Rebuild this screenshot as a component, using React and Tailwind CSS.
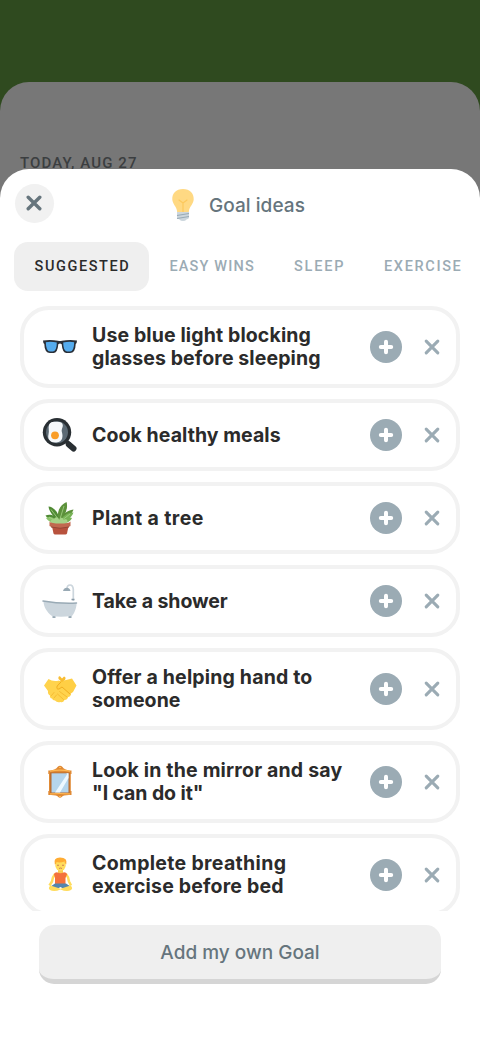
import { useState } from "react";
import clsx from "clsx";

/* emoji style drawings, all on a 36x36 grid */
const Glasses = () => (
  <svg viewBox="0 0 36 36" className="size-9 shrink-0">
    <path d="M1 11.4Q9 10.2 16 11.8Q18 12.4 20 11.8Q27 10.2 35 11.4L34.6 14L33.7 15Q33.5 24 28 24H24.5Q20.4 24 19.7 15.3Q18 13.8 16.3 15.3Q15.6 24 11.500 24H8Q2.500 24 2.300 15L1.400 14Z" fill="#292f38" />
    <path d="M3.800 13.200Q9 12.300 14.800 13.600Q14.700 22.500 11 22.500H8Q4 22.500 3.800 13.200Z" fill="#55acee" />
    <path d="M32.200 13.200Q27 12.300 21.200 13.600Q21.300 22.500 25 22.500H28Q32 22.500 32.200 13.200Z" fill="#55acee" />
  </svg>
);

const Pan = () => (
  <svg viewBox="0 0 36 36" className="size-9 shrink-0">
    <path d="M26.800 27.500L31.500 31.500" stroke="#292f33" strokeWidth="6" strokeLinecap="round" />
    <path d="M23 23L28 28" stroke="#292f33" strokeWidth="4" />
    <circle cx="15" cy="15.200" r="14.200" fill="#292f33" />
    <circle cx="15" cy="15.200" r="11" fill="#5c6a74" />
    <path d="M7 8C8.500 4.500 11 5 14 4.800C18 4.500 20.500 5.500 20.800 8C21 11 19 12 20 15.500C21 19 21 25 14.500 25.500C8 26 5.300 22 6.500 17.500C7.500 13.500 6 11 7 8Z" fill="#f5f8fa" />
    <circle cx="13" cy="18.300" r="3.900" fill="#f99d27" />
  </svg>
);

const Plant = () => (
  <svg viewBox="0 0 36 36" className="size-9 shrink-0">
    <path d="M18 22C12 21 6 19.500 3.500 15.500C9 13.500 15 16 18 22Z" fill="#4f8a34" />
    <path d="M18 21C20 14 25 10.500 31.500 9.500C30 14.500 25 18 19 22Z" fill="#5c913b" />
    <path d="M17 21C11 17 7 11 6.500 6.500C12 7 17 13 18 21Z" fill="#4f8a34" />
    <path d="M17 20C14 12 18 5 24.500 2C26.500 8 23 16 18 21Z" fill="#5c913b" />
    <path d="M18 22C20 16 26 12 31.500 12.500C29.500 18 24 21 18 23Z" fill="#77b255" />
    <path d="M17 23C13 17 7 16 4 18C7 22 12 24 17 24Z" fill="#8cc46c" />
    <path d="M18 24C18 19 24 16.500 30 18C28 22 23 24 18 24Z" fill="#77b255" />
    <path d="M9 23C8 20 11 18 12 20C12 17 16 16 17 20C19 16 22 18 21 20C25 18 27 21 24 24H10Z" fill="#a6d388" />
    <path d="M18 19L22 6M17 20L9 9.500M19 21L28 14M14 21L7 17" stroke="#a6d388" strokeWidth=".8" fill="none" />
    <path d="M9.500 24H27L25 33.500Q24.500 34.500 23.500 34.500H13Q12 34.500 11.500 33.500Z" fill="#b8523d" />
    <path d="M7.500 21.500Q9 23.500 18 23.500T28.500 21.500V26Q25 28 18 28T7.500 26Z" fill="#c1694f" />
    <path d="M9 27Q18 29.500 27 27" stroke="#974635" strokeWidth="1" fill="none" />
  </svg>
);

const Bathtub = () => (
  <svg viewBox="0 0 36 36" className="size-9 shrink-0">
    <path d="M31.300 18V6.500Q31 2 28 2T25 6" stroke="#ccd6dd" strokeWidth="1.700" fill="none" />
    <path d="M21 8Q22 4.800 24.800 4.800T28.500 8Z" fill="#99aab5" />
    <path d="M29.500 16.500H32.500" stroke="#8899a6" strokeWidth="1.500" />
    <path d="M12 32V35M28 32V35" stroke="#99aab5" strokeWidth="3" />
    <path d="M1.500 18C14 20 24 20.500 34.500 20V22C34 26 32 31 30 33Q18 34.500 10 33C4.500 29 1.500 23 1.500 18Z" fill="#ccd6dd" />
    <path d="M1 18C13 20 24 20.500 34.500 20" stroke="#99aab5" strokeWidth="1.500" strokeLinecap="round" fill="none" />
  </svg>
);

const Handshake = () => (
  <svg viewBox="0 0 36 36" className="size-9 shrink-0">
    <path d="M2 14.500L6.500 8Q11 11 17 9.500L21 13L29 23Q28.500 26 26 26Q25.500 29 22.500 29Q21 32 18.500 31Q15 32 13 29.500Q10.500 29.500 10 27.500Q7.500 27 8 24.500Q5.500 23 6 20Z" fill="#ffd34d" />
    <path d="M17 10L22 9.500L30 7.500L34.500 14.500L31 21L27.500 23.500L20 16L16 19Q13.500 17.500 15 14.500Z" fill="#ffcf45" />
    <path d="M19 11L15.200 15Q14 18.500 17 18L20 16L28 23" stroke="#f0ae22" strokeWidth="1" strokeLinecap="round" strokeLinejoin="round" fill="none" />
    <path d="M17.500 20.500L25 26M15.500 23L21.500 28.500M9.500 24.500L12 21.500M12 27L14.500 24" stroke="#f4b52b" strokeWidth=".8" strokeLinecap="round" fill="none" />
    <path d="M16.500 8Q16 4.800 18 5.200L20 7.500L22 5.500Q24.500 6 23 9L20 11Z" fill="#f9bd32" />
  </svg>
);

const Mirror = () => (
  <svg viewBox="0 0 36 36" className="size-9 shrink-0">
    <path d="M6.300 6.500H8Q14 5.500 15.500 3Q18 .500 20.500 3Q22 5.500 28 6.500H29.500V10H28.800V27H29.500V31H27Q21 31 20 32.800Q18 34.500 16 32.800Q15 31 9 31H6.300V27H7V10H6.300Z" fill="#e08a35" />
    <path d="M8 7.300Q18 5 28 7.300M8 30Q18 29 28 30M17 3.500H19M17 32.500H19" stroke="#ffb955" strokeWidth="1.100" fill="none" />
    <path d="M8.200 8.500H27.700V29H8.200Z" fill="#b3692f" />
    <path d="M9.500 9.300H26.500V28.500H9.500Z" fill="#b5d5ec" />
    <path d="M24.500 9.300H26.500V14L18 28.500H13L25 10.500Z" fill="#edf8ff" />
  </svg>
);

const Meditation = () => (
  <svg viewBox="0 0 36 36" className="size-9 shrink-0">
    <path d="M13 17Q10.500 20 10 24.500L7.500 28.500" stroke="#ffdc5d" strokeWidth="2.500" fill="none" />
    <path d="M24 17Q26.500 20 27 24.500L29 28.500" stroke="#ffdc5d" strokeWidth="2.500" fill="none" />
    <path d="M16 12H21V18H16Z" fill="#f9ca55" />
    <ellipse cx="18.500" cy="8" rx="5.300" ry="6" fill="#ffdc5d" />
    <path d="M12.800 7.500Q11 .800 18 .600Q26 .600 24.300 7.500Q22.500 6.500 22.500 4.500Q18 6 14.500 5Q14.500 7 12.800 7.500Z" fill="#ffac33" />
    <path d="M15 8Q16 9 17 8M20 8Q21 9 22 8M17 11.500Q18.500 10.500 20 11.500" stroke="#c1694f" strokeWidth=".8" fill="none" />
    <path d="M12 17.500Q12 15.500 15 15.200Q18.500 17.500 22 15.200Q25 15.500 25 17.500L23.500 21V28H13V21Z" fill="#f4713c" />
    <path d="M13 26.500H24L28.500 29.500Q22 33 18.500 30Q15 33 8.500 29.500Z" fill="#5385ae" />
    <path d="M8.500 28.500L18.500 31.800L28.500 28.500Q31.500 31 29 33Q25 35.300 18.500 32.500Q12 35.300 8 33Q5.500 31 8.500 28.500Z" fill="#ffdc5d" />
  </svg>
);

const Bulb = () => (
  <svg viewBox="0 0 24 34" className="h-[34px] w-6 shrink-0">
    <path d="M12 1C5 1 1 5.500 1.300 11.500C1.500 16 5.700 18.500 6.200 24H17.800C18.300 18.500 22.500 16 22.700 11.500C23 5.500 19 1 12 1Z" fill="#ffd983" />
    <path d="M8 12L12 15L16 12M12 15V24" stroke="#fcc85c" strokeWidth="1.200" fill="none" strokeLinecap="round" strokeLinejoin="round" />
    <path d="M6 24H18V29.500Q18 31 15.500 31.500Q14.500 33 12 33T8.500 31.500Q6 31 6 29.500Z" fill="#ccd6dd" />
    <path d="M6 27.500L18 25.500M6 30.500L18 28.500" stroke="#99aab5" strokeWidth="1.200" />
  </svg>
);

const Cross = ({ className }) => (
  <svg viewBox="0 0 16 16" className={className} fill="none" stroke="currentColor" strokeLinecap="round">
    <path d="M2.200 2.200L13.800 13.800M13.800 2.200L2.200 13.800" />
  </svg>
);

const tabs = [
  { name: "Suggested", style: "w-[135px] pl-[20.5px] tracking-[1.6px]" },
  { name: "Easy wins", style: "w-[125px] pl-[20.5px] tracking-[1.15px]" },
  { name: "Sleep", style: "w-[90px] pl-5 tracking-[1.8px]" },
  { name: "Exercise", style: "w-[110px] pl-5 tracking-[1.65px]" },
];

const goals = [
  {
    Icon: Glasses,
    lines: [
      { text: "Use blue light blocking", style: "tracking-[0.12px]" },
      { text: "glasses before sleeping", style: "tracking-[0.1px]" },
    ],
  },
  { Icon: Pan, lines: [{ text: "Cook healthy meals", style: "tracking-[0.06px]" }] },
  { Icon: Plant, lines: [{ text: "Plant a tree", style: "tracking-[0.4px]" }] },
  { Icon: Bathtub, lines: [{ text: "Take a shower", style: "tracking-[-0.07px]" }] },
  {
    Icon: Handshake,
    lines: [
      { text: "Offer a helping hand to", style: "tracking-[0.17px]" },
      { text: "someone", style: "tracking-[0.08px]" },
    ],
  },
  {
    Icon: Mirror,
    lines: [
      { text: "Look in the mirror and say", style: "tracking-[0.18px]" },
      { text: '"I can do it"', style: "tracking-[-0.1px]" },
    ],
  },
  {
    Icon: Meditation,
    lines: [
      { text: "Complete breathing", style: "tracking-[0.32px]" },
      { text: "exercise before bed", style: "tracking-[0.18px]" },
    ],
  },
];

const GoalCard = ({ goal }) => {
  const { Icon, lines } = goal;
  return (
    <div
      className={clsx(
        "flex shrink-0 items-center rounded-[29px] border-4 border-[#f2f2f2] pl-[18px] pr-4",
        lines.length > 1 ? "h-[82px]" : "h-[72px]"
      )}
    >
      <Icon />
      <div className="ml-[14px] flex-1 font-['Inter',sans-serif] text-[19.5px] font-bold leading-[23px] text-[#2b2b2b]">
        {lines.map((line) => (
          <div key={line.text}>
            <span className={clsx("whitespace-nowrap", line.style)}>{line.text}</span>
          </div>
        ))}
      </div>
      <button className="flex size-8 shrink-0 items-center justify-center rounded-full bg-[#9babb4]">
        <svg viewBox="0 0 16 16" className="size-4" stroke="#fff" strokeWidth="4" strokeLinecap="round">
          <path d="M8 2.800V13.200M2.800 8H13.200" />
        </svg>
      </button>
      <button className="ml-[22px] shrink-0 text-[#9babb4]">
        <Cross className="size-4 stroke-[3.1]" />
      </button>
    </div>
  );
};

export default function App() {
  const [active, setActive] = useState("Suggested");

  return (
    <div className="h-[1040px] w-[480px] overflow-hidden bg-[#2f4a1f] pt-[82px] font-['Roboto',sans-serif]">
      <div className="h-full rounded-t-[29px] bg-[#777777]">
        {/* page behind the sheet */}
        <div className="h-[87px] overflow-hidden pl-5 pt-[72px]">
          <p className="text-[15px] font-medium leading-[18px] tracking-[1.1px] text-[#3b3e40]">TODAY, AUG 27</p>
        </div>

        {/* sheet */}
        <div className="flex h-[871px] flex-col rounded-t-[29px] bg-white">
          <div className="flex h-[73px] shrink-0 items-start pl-[14.5px] pt-[14.5px]">
            <button className="flex size-[39px] items-center justify-center rounded-full bg-[#f1f1f1] text-[#66757d]">
              <Cross className="size-4 stroke-[3.4]" />
            </button>
            <div className="ml-[117px] mt-[4px] flex items-center">
              <Bulb />
              <h1 className="ml-[14.5px] mt-[4px] font-['Inter',sans-serif] text-[19px] font-medium tracking-[0.05px] text-[#66757d]">
                Goal ideas
              </h1>
            </div>
          </div>

          {/* categories */}
          <div className="flex h-[49px] shrink-0 overflow-hidden pl-[14px]">
            {tabs.map((tab) => (
              <button
                key={tab.name}
                onClick={() => setActive(tab.name)}
                className={clsx(
                  "shrink-0 rounded-[14px] text-left text-[14.5px] font-medium uppercase",
                  tab.style,
                  active === tab.name ? "bg-[#efefef] text-[#2b2b2b]" : "text-[#9babb4]"
                )}
              >
                {tab.name}
              </button>
            ))}
          </div>

          {/* goals */}
          <div className="flex h-[620px] shrink-0 flex-col gap-[11px] overflow-hidden px-5 pt-[15px]">
            {goals.map((goal) => (
              <GoalCard key={goal.lines[0].text} goal={goal} />
            ))}
          </div>

          <button className="mx-[39px] mt-[14px] h-[59px] shrink-0 rounded-[15px] border-b-[5px] border-[#d5d5d5] bg-[#efefef] pt-[2px] font-['Inter',sans-serif] text-[19px] font-medium text-[#66757d]">
            Add my own Goal
          </button>
        </div>
      </div>
    </div>
  );
}
